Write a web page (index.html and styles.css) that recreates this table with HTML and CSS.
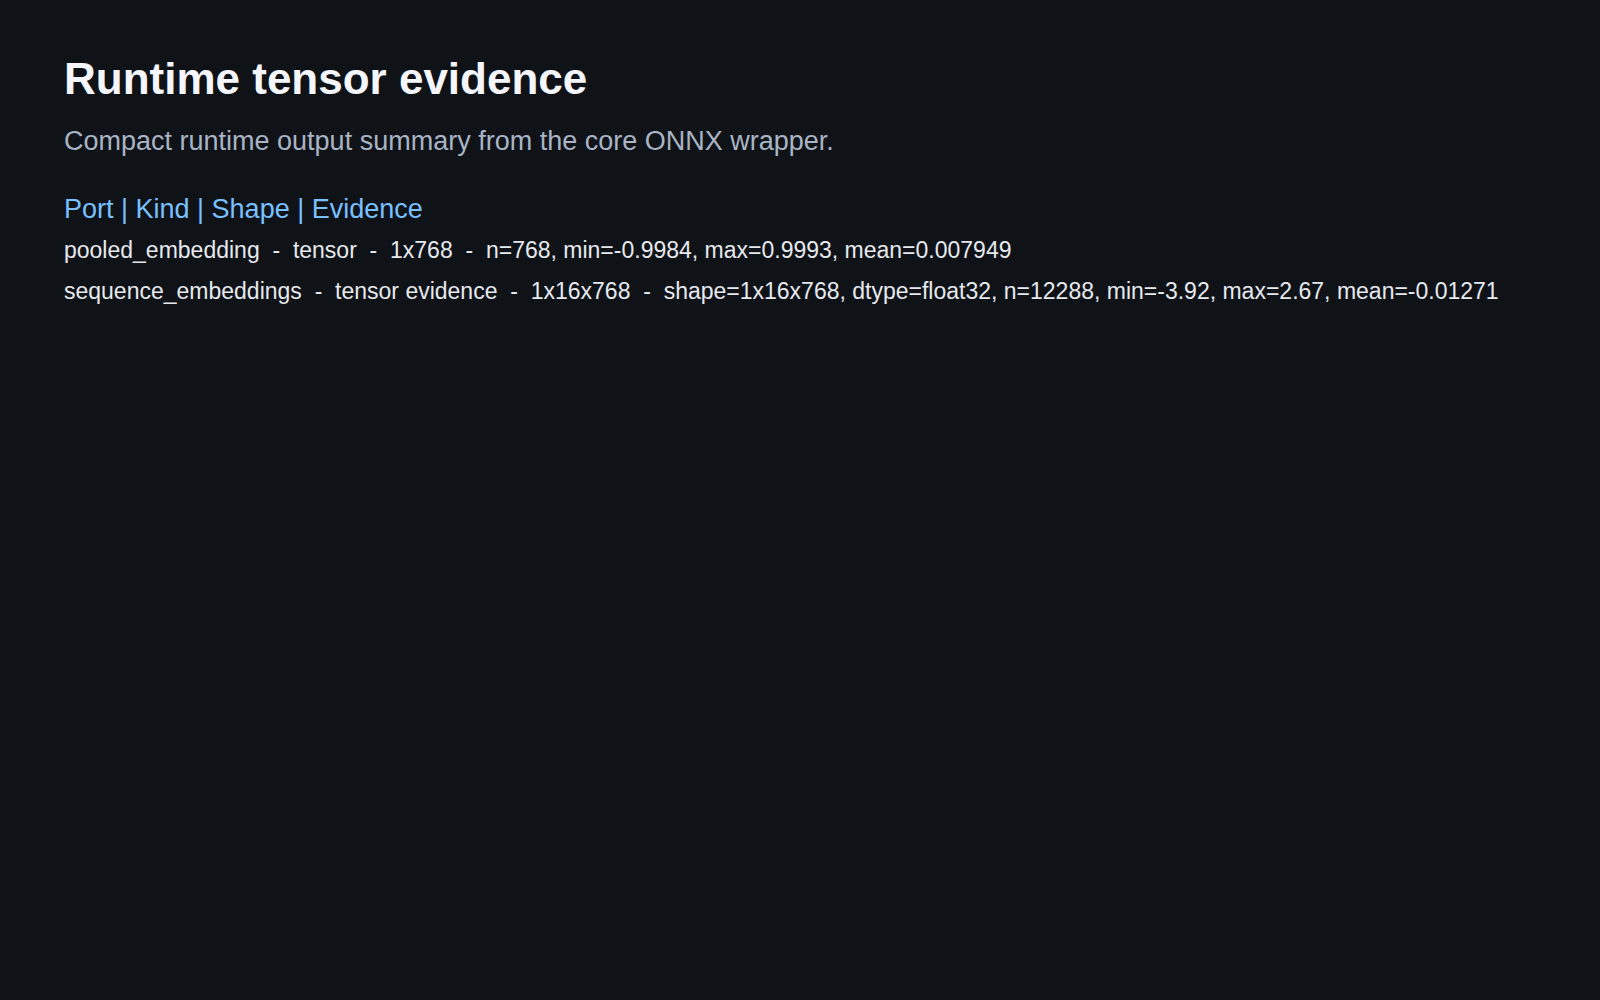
FILE: index.html
```html
<!DOCTYPE html>
<html lang="en">
<head>
<meta charset="utf-8">
<title>Runtime tensor evidence</title>
<link rel="stylesheet" href="styles.css">
</head>
<body>
<main class="page">
  <h1 class="title">Runtime tensor evidence</h1>
  <p class="subtitle">Compact runtime output summary from the core ONNX wrapper.</p>
  <section class="table">
    <div class="table-head">Port | Kind | Shape | Evidence</div>
    <div class="rows">
      <div class="row">pooled_embedding  -  tensor  -  1x768  -  n=768, min=-0.9984, max=0.9993, mean=0.007949</div>
      <div class="row">sequence_embeddings  -  tensor evidence  -  1x16x768  -  shape=1x16x768, dtype=float32, n=12288, min=-3.92, max=2.67, mean=-0.01271</div>
    </div>
  </section>
</main>
</body>
</html>
```

FILE: styles.css
```css
html, body {
  margin: 0;
  padding: 0;
  background: #0f1217;
}
body {
  font-family: "Liberation Sans", Arial, sans-serif;
  color: #e6e9ee;
}
.page {
  padding: 53px 64px;
}
.title {
  margin: 0;
  font-size: 44px;
  line-height: 52px;
  font-weight: 700;
  color: #f4f6fb;
}
.subtitle {
  margin: 19px 0 0;
  font-size: 27px;
  line-height: 34px;
  color: #a9b4c4;
}
.table {
  margin-top: 34px;
}
.table-head {
  font-size: 27px;
  line-height: 34px;
  color: #79c0ff;
  margin-bottom: 9px;
}
.rows {
  display: flex;
  flex-direction: column;
  gap: 11px;
}
.row {
  font-size: 23px;
  line-height: 30px;
  white-space: pre;
  color: #e6e9ee;
}
```
